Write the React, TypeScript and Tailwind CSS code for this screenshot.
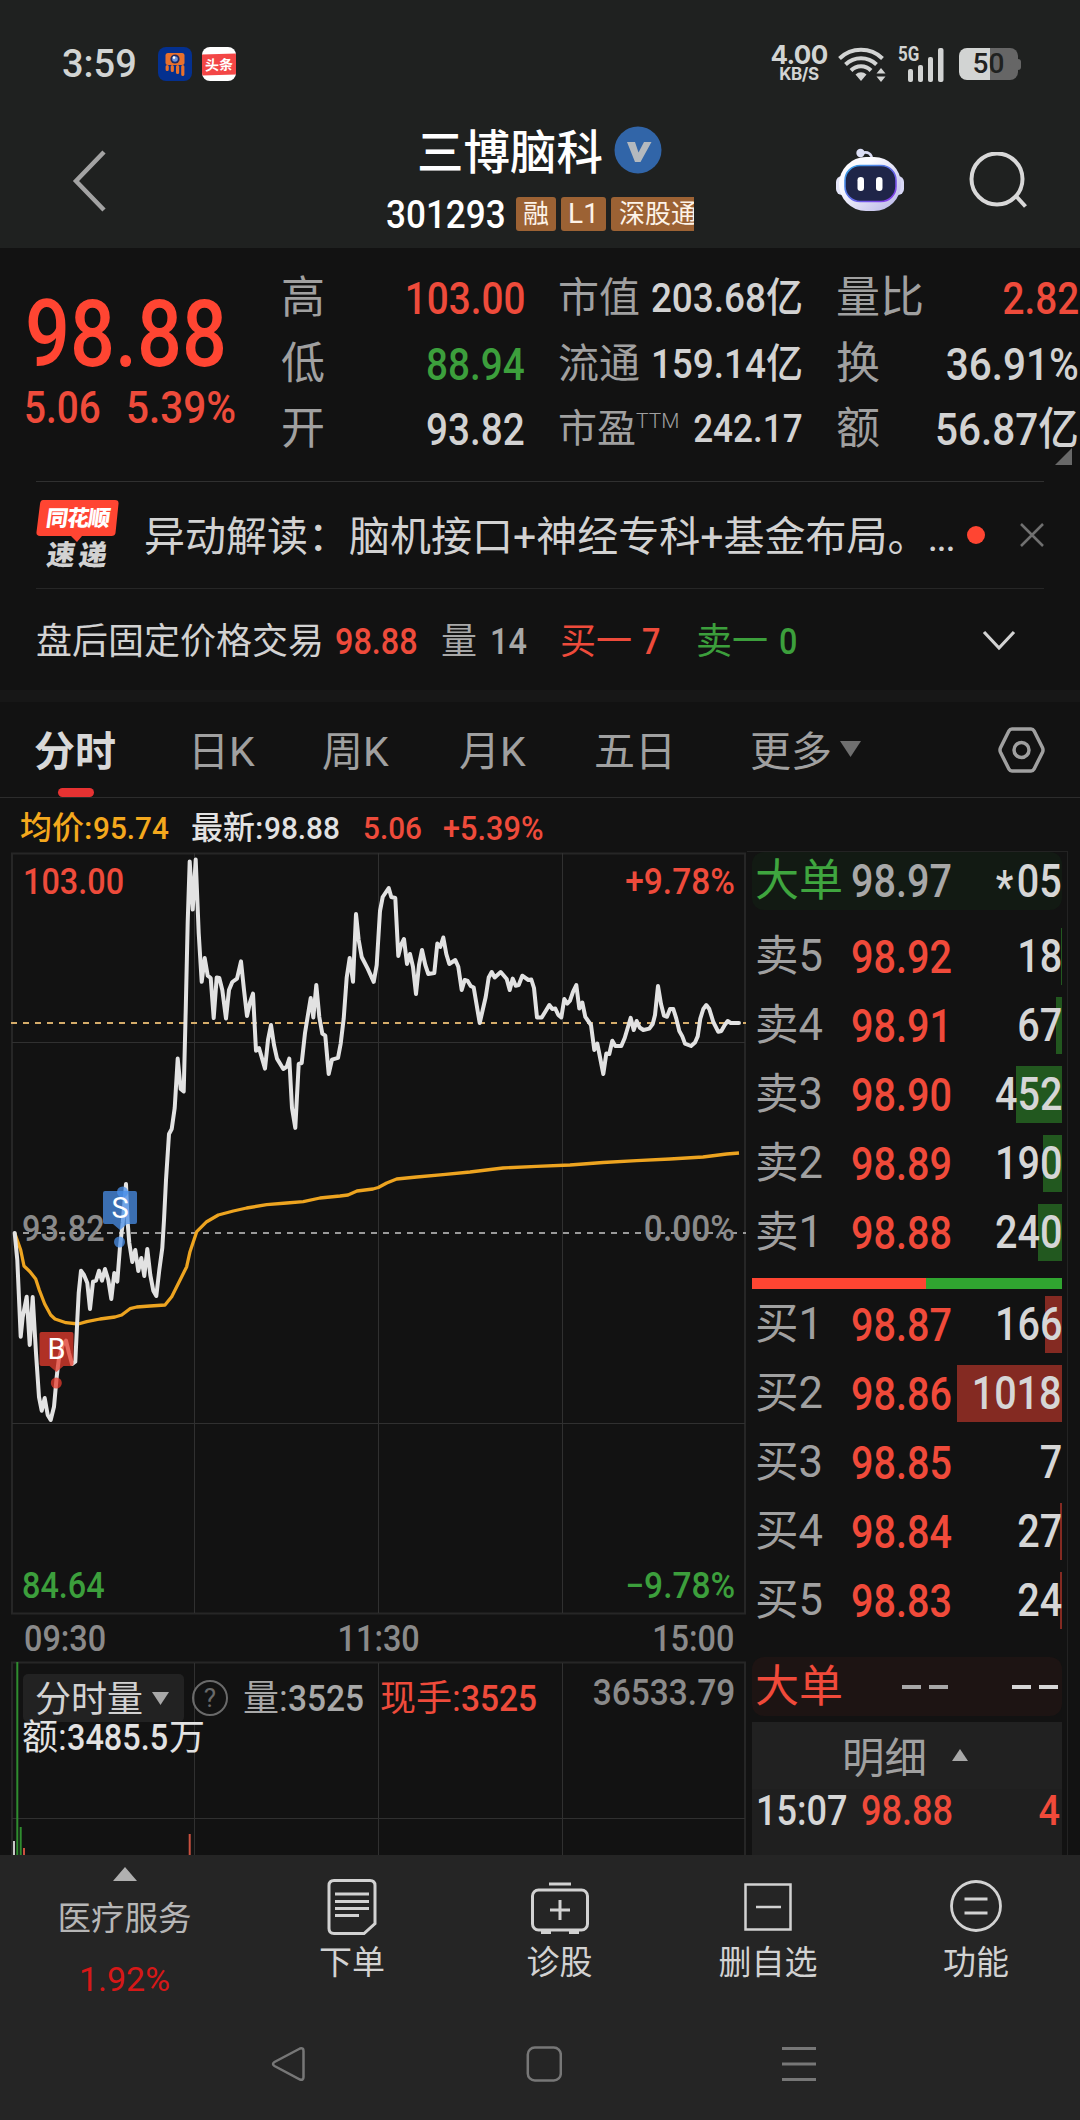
import type { ReactNode } from "react";
import { clsx } from "clsx";

interface NumProps {
  children: ReactNode;
  className?: string;
  align?: "left" | "right" | "center";
  fit?: "tight" | "base" | "wide";
}

/* Slightly condensed digits, anchored on the side they are aligned to */
function Num({ children, className, align = "left", fit = "base" }: NumProps) {
  return (
    <span
      className={clsx(
        "inline-block shrink-0 font-medium whitespace-nowrap",
        fit === "tight" && "scale-x-[0.86]",
        fit === "base" && "scale-x-[0.9]",
        fit === "wide" && "scale-x-[0.93]",
        align === "left" && "origin-left",
        align === "right" && "origin-right",
        align === "center" && "origin-center",
        className
      )}
    >
      {children}
    </span>
  );
}

interface BookRow {
  label: string;
  price: string;
  volume: string;
  bar: string;
}

const asks: BookRow[] = [
  { label: "卖5", price: "98.92", volume: "18", bar: "w-px" },
  { label: "卖4", price: "98.91", volume: "67", bar: "w-[6px]" },
  { label: "卖3", price: "98.90", volume: "452", bar: "w-[46px]" },
  { label: "卖2", price: "98.89", volume: "190", bar: "w-[19px]" },
  { label: "卖1", price: "98.88", volume: "240", bar: "w-[24px]" },
];

const bids: BookRow[] = [
  { label: "买1", price: "98.87", volume: "166", bar: "w-[17px]" },
  { label: "买2", price: "98.86", volume: "1018", bar: "w-[105px]" },
  { label: "买3", price: "98.85", volume: "7", bar: "w-0" },
  { label: "买4", price: "98.84", volume: "27", bar: "w-[2px]" },
  { label: "买5", price: "98.83", volume: "24", bar: "w-[2px]" },
];

const pricePoints =
  "14.7,1233 17.3,1260 20.7,1336.7 22.7,1317 26.7,1296.7 29.7,1345 32.7,1297 36,1353 39,1397 41.7,1410.7 44.7,1398 47.7,1415 50.7,1420 54,1406.7 56.7,1376.7 58.7,1360 62.7,1345 66,1340.7 69,1353 72,1364 75.3,1361.7 77.3,1320 78.7,1293 81,1270.7 84,1275 87.3,1283 90,1309 93,1281.7 96,1280.7 99,1270.7 102,1280.7 105,1269 108.3,1280 111.3,1299 114.3,1273 117.3,1281.7 120,1246.7 122.7,1223 126,1184 127.7,1223 129.3,1243 132.3,1262 135.3,1250 138.3,1271 141.3,1258 144.3,1276 147.3,1249 150.3,1275 153.3,1290.7 156.3,1296 159.3,1270 162.3,1248 164,1220 166,1180 169,1134 171.7,1129 174.7,1108 177.7,1058.6 180.7,1089 183.7,1091.4 185.7,1011 187.7,922 189.7,861.4 192.7,909.6 195.7,859.6 198.7,933 201.7,981.8 204.7,958 207.7,975.7 210.7,978 213.7,1018 216.7,977.5 219.3,978 222.3,990 226,1018.6 229,990 232.3,982 237,978.6 241,961.4 244,990 247,1016 250,1002.5 253,993.6 256,1050.7 259,1048 265,1068.6 268,1040 271,1025 274,1045 277,1058.6 283.3,1069 286.7,1066.8 289.3,1058.6 292,1108 295.3,1127.9 298.7,1064 301.7,1063 305,1033 310.7,998 313.3,1017.5 316.3,985 319.3,1017 322.3,1033.6 325.3,1035.7 328.7,1074 332,1059.6 338,1057.9 340.7,1043.6 343.7,1018.6 346.7,977.5 349.7,957.9 353,981.8 356,914 358.7,940 361.7,957 367.7,968.6 373.7,981.8 376.7,965 380,911 382.7,897 388.7,888 391.3,897 395.3,898 398.3,956 401,945 404,939 407,964 410,954 413,967 416,994 419,965 422,950 425.3,965 428.3,974 434.3,973 437.3,943.6 440.3,947 443.3,937.5 446.3,954 449.3,964 455.3,960 458.3,966.8 461.7,990 464.7,980 467.7,981 470.7,986 473.7,987.5 479.7,1023 485.7,997 488.7,977.5 491.7,972 494.7,977.5 500.7,972 506.7,979 509.7,990 512.7,978.6 515.7,985.7 518.7,985 522.3,975.7 528.3,980 531.3,979.5 534,988 537,1017.5 541.7,1017.5 545.7,1011 549.3,1005 552.3,1009 555.3,1008.6 558.3,1015 561.3,1017.5 564.3,999 567.3,1003.6 570,1000.7 573,991.8 576.3,985 579.3,1008.6 582.3,1002.5 585.3,1016.8 591,1025 594.3,1050 597.3,1043.6 603.3,1074 606.3,1053.6 609.3,1054 612.3,1040.7 615.3,1046 621.3,1046 624.7,1038 630.7,1017.9 633.7,1030 636.7,1021 639.7,1027.5 643.3,1030 649.3,1028.6 652.7,1024 655,1015 658,986 661,1004 664,1015.7 667,1016.8 670,1009 673.3,1009 676.3,1018.6 679.3,1031 682.3,1036.4 685,1043.6 691,1046 695,1042.5 697.7,1036.4 700.3,1018.6 703.3,1009 706.3,1005 709.3,1009 713.3,1022 718.3,1031.8 721.3,1031 724.3,1025.7 727.7,1021 730.7,1023 739,1023";

const averagePoints =
  "14.7,1233 20.7,1250 24,1266 30,1271.7 35.7,1279 39.3,1290 44.7,1304 50.7,1315 55,1319 66,1322.7 78.3,1324 86.7,1321.7 100,1319 115,1317 121.7,1315 130,1308.7 136.7,1307 150,1306 165,1305 171.7,1296.7 181.7,1276.7 186.7,1266.7 190,1251.7 196.7,1231.7 206.7,1221.7 218.3,1215 233.3,1211 246.7,1208 266.7,1204.7 286.7,1203 303.3,1201.7 320,1198 340,1196 348,1195 357,1191 373,1189 378.3,1187.5 386.7,1183 396.7,1179 416.7,1177 443,1174.6 470,1172 503,1168 536.7,1166.4 570,1165 603,1162.5 636.7,1160.7 670,1159 703,1157 726.7,1154 739,1153";

function StatusBar() {
  return (
    <div className="flex h-32 items-center pl-[62px] text-[#d2d4d3]">
      <span className="w-[96px] text-[38px] font-medium">3:59</span>
      <svg width="34" height="34" viewBox="0 0 34 34">
        <rect width="34" height="34" rx="8" fill="#04308f" />
        <rect x="7.5" y="6" width="19" height="12" rx="2.5" fill="#e8702c" />
        <circle cx="17" cy="12" r="4.6" fill="#1c2a66" />
        <circle cx="17" cy="12" r="2.8" fill="#6f95dc" />
        <circle cx="16" cy="10.6" r="1.3" fill="#fff" />
        <path
          d="M9.2 19.5v3M14.3 19.5v4M19.6 19.5v6M24.8 19.5v8"
          stroke="#e8702c"
          strokeWidth="3.2"
          strokeLinecap="round"
        />
      </svg>
      <div className="ml-[10px] flex h-[34px] w-[34px] flex-col justify-center overflow-hidden rounded-[8px] bg-white">
        <div className="flex h-[21px] -skew-y-2 items-center justify-center bg-[#f34646] text-[14px] font-bold text-white">
          头条
        </div>
      </div>
      <div className="ml-[533px] flex w-[60px] flex-col items-center font-['Inter'] font-bold">
        <span className="-mt-[3px] text-[26px] leading-[23px] tracking-tight">4.00</span>
        <span className="text-[17px] leading-[16px] tracking-tight">KB/S</span>
      </div>
      <svg className="ml-[9px]" width="48" height="36" viewBox="0 0 48 36" fill="none">
        <g stroke="#d2d4d3" strokeWidth="4">
          <path d="M1.5 12.5a31 31 0 0 1 43 0" />
          <path d="M7.5 18.5a22.5 22.5 0 0 1 31 0" />
          <path d="M13 24.5a14 14 0 0 1 20 0" />
        </g>
        <path d="M17.5 28.5a8 8 0 0 1 11 0L23 35z" fill="#d2d4d3" />
        <path d="M43 22l4.5 5.5h-9zM43 36l4.5-5.5h-9z" fill="#d2d4d3" />
      </svg>
      <div className="relative ml-[12px] h-[36px] w-[46px]">
        <span className="absolute top-0 left-0 origin-left scale-x-[0.85] text-[20px] leading-[17px] font-bold">
          5G
        </span>
        <svg width="46" height="36" viewBox="0 0 46 36" fill="#d2d4d3">
          <rect x="10" y="23" width="5" height="13" rx="2" />
          <rect x="20" y="19" width="5" height="17" rx="2" />
          <rect x="30" y="11" width="5" height="25" rx="2" />
          <rect x="40" y="2" width="5.5" height="34" rx="2" />
        </svg>
      </div>
      <div className="ml-[15px] flex items-center">
        <div className="flex h-8 w-[59px] items-center justify-center rounded-[8px] bg-linear-to-r from-[#d2d4d3] from-53% to-[#666] to-53% text-[28px] font-medium text-[#1f2120]">
          50
        </div>
        <div className="h-[11px] w-[3px] rounded-r-[3px] bg-[#666]" />
      </div>
    </div>
  );
}

function RobotIcon() {
  return (
    <svg width="70" height="66" viewBox="0 0 70 66">
      <defs>
        <linearGradient id="shell" x1="0" y1="0" x2="1" y2="1">
          <stop offset="0.3" stopColor="#fbfbff" />
          <stop offset="1" stopColor="#b4b2e6" />
        </linearGradient>
        <linearGradient id="rim" x1="0" y1="0" x2="1" y2="1">
          <stop offset="0" stopColor="#35a6e6" />
          <stop offset="1" stopColor="#8a35e8" />
        </linearGradient>
      </defs>
      <path d="M26 5c6-2 10 1 10 7" stroke="#dadcf4" strokeWidth="2.6" fill="none" />
      <circle cx="24.500" cy="5" r="4.200" fill="#dcdff5" />
      <rect x="0" y="28" width="12" height="19" rx="6" fill="#e4e5f8" />
      <rect x="56" y="28" width="12" height="19" rx="6" fill="#d8d8f6" />
      <rect x="3" y="9" width="62" height="54" rx="27" fill="url(#shell)" />
      <rect x="9" y="17.500" width="51" height="36" rx="15" fill="#1f2548" stroke="url(#rim)" strokeWidth="1.600" />
      <rect x="21.500" y="29" width="6.500" height="14" rx="3.200" fill="#fff" />
      <rect x="40" y="29" width="6.500" height="14" rx="3.200" fill="#fff" />
    </svg>
  );
}

function TitleBar() {
  return (
    <div className="flex h-[120px]">
      <div className="w-[386px] pt-[22px] pl-[71px]">
        <svg width="38" height="62" viewBox="0 0 38 62" fill="none">
          <path d="M33 2L5 31l28 29" stroke="#a3a3a3" strokeWidth="4.500" />
        </svg>
      </div>
      <div className="w-[450px]">
        <div className="flex h-[47px] items-center pl-[31px]">
          <span className="w-[197px] pt-[3px] text-[46.500px] font-medium text-white">三博脑科</span>
          <svg className="-mt-[3px]" width="48" height="48" viewBox="0 0 48 48">
            <circle cx="24" cy="24" r="23.500" fill="#3165a8" />
            <path d="M13 16h8l3.500 10.500L30 16h7.500L26.500 36h-5.500z" fill="#b4b9be" />
          </svg>
        </div>
        <div className="mt-[21px] flex h-[35px] items-center text-[26px] text-[#fdf3e8]">
          <div className="w-[130px] pt-[3px]">
            <Num className="text-[39px] text-white">301293</Num>
          </div>
          <span className="flex h-[34px] w-[40px] items-center justify-center rounded-[3px] bg-[#9c6234]">融</span>
          <span className="ml-[5px] flex h-[34px] w-[45px] items-center justify-center rounded-[3px] bg-[#9c6234] text-[28px]">
            L1
          </span>
          <span className="ml-[5px] flex h-[34px] w-[83px] items-center overflow-hidden rounded-l-[3px] bg-[#9c6234] pl-[8px] whitespace-nowrap">
            深股通
          </span>
        </div>
      </div>
      <div className="pt-[20px]">
        <RobotIcon />
      </div>
      <svg className="mt-[24px] ml-[62px]" width="62" height="62" viewBox="0 0 62 62" fill="none">
        <circle cx="29" cy="27" r="25.500" stroke="#d8d8d8" strokeWidth="4" />
        <path d="M48 44l9.500 10.500" stroke="#d8d8d8" strokeWidth="4" />
      </svg>
    </div>
  );
}

function Quote() {
  return (
    <section className="relative flex h-[233px] whitespace-nowrap text-[#d2d2d2]">
      <div className="w-[281px] pl-[24px] text-[#ee4b3b]">
        <Num fit="tight" className="mt-[41px] ml-px block text-[92px] leading-[92px] text-[#ff4532]">98.88</Num>
        <div className="mt-[4px] flex leading-[45px]">
          <Num fit="tight" className="w-[102px] text-[45px]">5.06</Num>
          <Num className="text-[45px]">5.39%</Num>
        </div>
      </div>
      <div className="w-[244px] pt-[18px] text-[44px] leading-[65.500px]">
        <div className="flex justify-between">
          <span className="text-[#a0a0a0]">高</span>
          <Num align="right" fit="tight" className="text-[45px] text-[#ee4b3b]">103.00</Num>
        </div>
        <div className="flex justify-between">
          <span className="text-[#a0a0a0]">低</span>
          <Num align="right" fit="tight" className="text-[45px] text-[#3c9f3c]">88.94</Num>
        </div>
        <div className="flex justify-between">
          <span className="text-[#a0a0a0]">开</span>
          <Num align="right" fit="tight" className="text-[45px]">93.82</Num>
        </div>
      </div>
      <div className="ml-[33px] w-[245px] pt-[18px] text-[41px] leading-[65.500px]">
        <div className="flex justify-between">
          <span className="text-[#a0a0a0]">市值</span>
          <Num align="right" className="-ml-4">203.68亿</Num>
        </div>
        <div className="flex justify-between">
          <span className="text-[#a0a0a0]">流通</span>
          <Num align="right" className="-ml-4">159.14亿</Num>
        </div>
        <div className="flex justify-between">
          <span className="flex text-[39px] text-[#a0a0a0]">
            市盈
            <span className="text-[21px] leading-[48px] font-light">TTM</span>
          </span>
          <Num align="right" className="text-[39px]">242.17</Num>
        </div>
      </div>
      <div className="ml-[33px] w-[243px] pt-[18px] text-[44px] leading-[65.500px]">
        <div className="flex justify-between">
          <span className="text-[#a0a0a0]">量比</span>
          <Num align="right" fit="tight" className="text-[45px] text-[#ee4b3b]">2.82</Num>
        </div>
        <div className="flex justify-between">
          <span className="text-[#a0a0a0]">换</span>
          <Num align="right" className="text-[45px]">36.91%</Num>
        </div>
        <div className="flex justify-between">
          <span className="text-[#a0a0a0]">额</span>
          <Num align="right" className="text-[45px]">56.87亿</Num>
        </div>
      </div>
      <svg className="absolute top-[200px] left-[1055px]" width="17" height="17" viewBox="0 0 17 17">
        <path d="M17 0v17H0z" fill="#686868" />
      </svg>
    </section>
  );
}

function NewsRow() {
  return (
    <div className="mx-[36px] flex h-[107px] items-center border-t border-[#303030] text-[#d2d2d2]">
      <svg className="overflow-visible" width="84" height="70" viewBox="0 0 84 70">
        <path d="M7 0h72q4 0 3.500 4l-3 29q-.5 3-4 3H46l-5 6-6-6H4q-4 0-3.500-4l3.500-28q.5-4 3-4z" fill="#ff4532" />
        <g fontFamily="Noto Sans CJK SC" fontWeight="900" transform="skewX(-8)">
          <text x="13" y="26.500" fontSize="22" fill="#fff" textLength="64">
            同花顺
          </text>
          <text x="19" y="65" fontSize="28" fill="#d2d2d2" textLength="60">
            速递
          </text>
        </g>
      </svg>
      <span className="mt-[4px] ml-[24px] text-[41px] whitespace-nowrap">
        异动解读：脑机接口+神经专科+基金布局。
      </span>
      <span className="mt-[4px] -ml-[1px] text-[41px] tracking-[-2px]">...</span>
      <span className="ml-[13px] h-[18px] w-[18px] shrink-0 rounded-full bg-[#ff4532]" />
      <svg className="ml-auto shrink-0" width="24" height="24" viewBox="0 0 24 24">
        <path d="M1 1l22 22M23 1L1 23" stroke="#707070" strokeWidth="2.500" />
      </svg>
    </div>
  );
}

function AfterHoursRow() {
  return (
    <div className="mx-[36px] flex h-[102px] items-center border-t border-[#262626] pt-[5px] text-[36px] text-[#d2d2d2]">
      <span className="w-[299px] whitespace-nowrap">盘后固定价格交易</span>
      <Num className="w-[106px] text-[#ee4b3b]">98.88</Num>
      <span className="w-[49px] text-[#a8a8a8]">量</span>
      <Num className="w-[70px] text-[#a8a8a8]">14</Num>
      <span className="w-[82px] text-[#ee4b3b]">买一</span>
      <Num className="w-[54px] text-[#ee4b3b]">7</Num>
      <span className="w-[83px] text-[#3c9f3c]">卖一</span>
      <Num className="text-[#3c9f3c]">0</Num>
      <svg className="mr-[28px] mb-[3px] ml-auto" width="34" height="22" viewBox="0 0 34 22" fill="none">
        <path d="M2 2l15 16L32 2" stroke="#d2d2d2" strokeWidth="3.200" />
      </svg>
    </div>
  );
}

function Tabs() {
  return (
    <nav className="flex h-[96px] border-b border-[#2c2c2c] text-[41px] leading-[101px] whitespace-nowrap text-[#a0a0a0]">
      <div className="relative ml-[34px] w-[154px] font-bold text-[#d8d8d8]">
        分时
        <span className="absolute bottom-0 left-[24px] h-[9px] w-[36px] rounded-full bg-[#e63232]" />
      </div>
      <span className="w-[134px]">日K</span>
      <span className="w-[137px]">周K</span>
      <span className="w-[135px]">月K</span>
      <span className="w-[156px]">五日</span>
      <span className="w-[90px]">更多</span>
      <svg className="mt-[39px]" width="21" height="16" viewBox="0 0 21 16">
        <path d="M0 0h21L10.500 16z" fill="#6f6f6f" />
      </svg>
      <svg className="mt-[24px] ml-[136px]" width="50" height="48" viewBox="0 0 50 48" fill="none" stroke="#a0a0a0" strokeWidth="3.500">
        <path d="M15 3h19q2 0 3 1.800l8.500 17q1 2.200 0 4.400l-8.500 17q-1 1.800-3 1.800H15q-2 0-3-1.800l-8.500-17q-1-2.200 0-4.400l8.500-17Q13 3 15 3z" />
        <circle cx="24.500" cy="24" r="7.500" />
      </svg>
    </nav>
  );
}

function ChartLegend() {
  return (
    <div className="flex h-[54px] items-center pt-[6px] pl-[20px] text-[32px] whitespace-nowrap">
      <span className="flex w-[171px] font-medium text-[#f4a81d]">
        均价:<Num fit="wide" className="ml-px">95.74</Num>
      </span>
      <span className="flex w-[172px] font-medium text-[#e2e2e2]">
        最新:<Num fit="wide" className="ml-px">98.88</Num>
      </span>
      <Num fit="wide" className="w-[80px] text-[#ee4b3b]">5.06</Num>
      <Num fit="wide" className="text-[33px] text-[#ee4b3b]">+5.39%</Num>
    </div>
  );
}

function PriceChart() {
  return (
    <div className="relative h-[764px] w-[746px] text-[36px] leading-[36px]">
      <svg width="746" height="764" viewBox="0 852 746 764" fill="none">
        <rect x="12" y="853.500" width="733" height="760" stroke="#262626" strokeWidth="2" />
        <path d="M194.500 853v760M378.500 853v760M562.500 853v760M12 1042.500h733M12 1423.500h733" stroke="#303030" />
        <path d="M11 1023h735" stroke="#d5ac6a" strokeWidth="2" strokeDasharray="6 6" />
        <path d="M23 1233h723" stroke="#9a9a9a" strokeWidth="2" strokeDasharray="6 6" />
        <polyline points={averagePoints} stroke="#eda420" strokeWidth="3.300" strokeLinejoin="round" />
        <polyline points={pricePoints} stroke="#e2e2e2" strokeWidth="4" strokeLinejoin="round" strokeLinecap="round" />
        <g fill="#4a8fe8" fillOpacity="0.75">
          <path d="M105 1191h30q2 0 2 2v29q0 2-2 2h-8l-7 6-7-6h-8q-2 0-2-2v-29q0-2 2-2z" />
          <circle cx="119.500" cy="1242" r="5.500" />
          <circle cx="122.500" cy="1192" r="5.500" />
        </g>
        <g fill="#e63c2e" fillOpacity="0.75">
          <path d="M41.500 1332h30q2 0 2 2v30q0 2-2 2h-8l-7 6-7-6h-8q-2 0-2-2v-30q0-2 2-2z" />
          <circle cx="56.300" cy="1383" r="5.500" />
        </g>
        <g fill="#fff" fontFamily="Roboto" fontSize="29" textAnchor="middle">
          <text x="120" y="1218">S</text>
          <text x="56.500" y="1359">B</text>
        </g>
      </svg>
      <Num className="absolute top-[12px] left-[23px] text-[#ee4b3b]">103.00</Num>
      <Num align="right" fit="wide" className="absolute top-[12px] right-[11px] text-[#ee4b3b]">+9.78%</Num>
      <Num className="absolute top-[359px] left-[22px] text-[#8a8a8a]">93.82</Num>
      <Num align="right" fit="wide" className="absolute top-[359px] right-[11px] text-[#8a8a8a]">0.00%</Num>
      <Num className="absolute top-[716px] left-[22px] text-[#3c9f3c]">84.64</Num>
      <Num align="right" fit="wide" className="absolute top-[716px] right-[11px] text-[#3c9f3c]">−9.78%</Num>
    </div>
  );
}

function VolumeChart() {
  return (
    <div className="relative h-[194px] w-[746px] overflow-hidden text-[36px]">
      <svg className="absolute top-0 left-0" width="746" height="194" viewBox="0 1661 746 194" fill="none">
        <path d="M12 1855v-192.500h733v192.500" stroke="#262626" strokeWidth="2" />
        <path d="M194.500 1663v192M378.500 1663v192M562.500 1663v192M12 1818.500h733" stroke="#303030" />
        <path d="M14 1841v14" stroke="#c8c8c8" strokeWidth="2" />
        <path d="M17.300 1662v193M20.700 1827v28" stroke="#2f8c2f" strokeWidth="2" />
        <path d="M24 1848v7M189.700 1834v21" stroke="#c9503f" strokeWidth="2" />
      </svg>
      <div className="relative mt-[13px] flex h-[48px] items-center pl-[23px] whitespace-nowrap">
        <div className="flex h-[48px] w-[161px] items-center rounded-[5px] bg-[#222] pl-[12px] text-[#d2d2d2]">
          <span className="pt-[3px] text-[36px]">分时量</span>
          <svg className="ml-[9px]" width="17" height="13" viewBox="0 0 17 13">
            <path d="M0 0h17L8.500 13z" fill="#a8a8a8" />
          </svg>
        </div>
        <span className="ml-[8px] flex h-[36px] w-[36px] items-center justify-center rounded-full border-2 border-[#6a6a6a] text-[26px] text-[#6a6a6a]">
          ?
        </span>
        <span className="ml-[15px] flex w-[137px] pt-[2px] text-[#a8a8a8]">
          量:<Num fit="wide">3525</Num>
        </span>
        <span className="flex w-[165px] pt-[2px] text-[#ee4b3b]">
          现手:<Num fit="wide">3525</Num>
        </span>
        <Num align="right" fit="wide" className="absolute top-px right-[11px] text-[36px] leading-[36px] text-[#8a8a8a]">
          36533.79
        </Num>
      </div>
      <div className="relative flex h-[32px] items-center pl-[22px] text-[36px] leading-[32px] whitespace-nowrap text-[#e2e2e2]">
        额:<Num className="-mr-[10px]">3485.5</Num>万
      </div>
    </div>
  );
}

function BookLine({ row, side }: { row: BookRow; side: "ask" | "bid" }) {
  return (
    <div className="relative my-[6px] flex h-[57px] items-center">
      <span
        className={clsx("absolute top-0 right-0 h-full", row.bar, side === "ask" ? "bg-[#22581f]" : "bg-[#842a22]")}
      />
      <span className="w-[99px] shrink-0 pl-[3px] text-[43.500px] text-[#a0a0a0]">{row.label}</span>
      <Num fit="tight" className="text-[46px] text-[#f04a3a]">{row.price}</Num>
      <Num align="right" fit="tight" className="absolute top-[5px] right-0 text-[46px] text-[#d6d6d6]">
        {row.volume}
      </Num>
    </div>
  );
}

function OrderBook() {
  return (
    <aside className="ml-px h-[1004px] w-[321px] border-t border-r border-[#232323] px-[5px]">
      <div className="flex h-[58px] items-center rounded-xl bg-[#121a13] pl-[3px]">
        <span className="w-[96px] text-[44px] text-[#3fa63f]">大单</span>
        <Num fit="tight" className="text-[46px] text-[#a8a8a8]">98.97</Num>
        <Num align="right" fit="tight" className="ml-auto text-[46px] text-[#d6d6d6]">
          <span className="relative top-[6px] mr-[4px]">*</span>05
        </Num>
      </div>
      <div className="mt-[12px] flex flex-col">
        {asks.map((row) => (
          <BookLine key={row.label} row={row} side="ask" />
        ))}
      </div>
      <div className="mt-[11px] flex h-[11px]">
        <div className="w-[174px] bg-[#ff4532]" />
        <div className="flex-1 bg-[#30a530]" />
      </div>
      <div className="mt-px flex flex-col">
        {bids.map((row) => (
          <BookLine key={row.label} row={row} side="bid" />
        ))}
      </div>
      <div className="mt-[22px] flex h-[59px] items-center rounded-xl bg-[#1d1413] pl-[3px]">
        <span className="w-[147px] text-[44px] text-[#f04a3a]">大单</span>
        <span className="h-1 w-[19px] bg-[#a8a8a8]" />
        <span className="ml-[8px] h-1 w-[19px] bg-[#a8a8a8]" />
        <span className="ml-auto h-1 w-[19px] bg-[#d6d6d6]" />
        <span className="mr-[4px] ml-[8px] h-1 w-[19px] bg-[#d6d6d6]" />
      </div>
      <div className="mt-[6px] flex h-[67px] items-center bg-[#212121] pt-[8px] pl-[90px] text-[42.500px] text-[#a0a0a0]">
        明细
        <svg className="mb-[10px] ml-[25px]" width="16" height="12" viewBox="0 0 16 12">
          <path d="M8 0l8 12H0z" fill="#a8a8a8" />
        </svg>
      </div>
      <div className="flex h-[66px] items-start bg-[#1f1f1f] pt-px pl-[4px] text-[42px] leading-[42px]">
        <Num fit="tight" className="w-[105px] text-[#d6d6d6]">15:07</Num>
        <Num fit="tight" className="text-[#f04a3a]">98.88</Num>
        <Num align="right" className="mr-[2px] ml-auto text-[#f04a3a]">4</Num>
      </div>
    </aside>
  );
}

function BottomBar() {
  return (
    <footer className="h-[265px] bg-[#252525] text-[33px] text-[#d2d2d2]">
      <div className="flex h-[145px]">
        <div className="flex w-[249px] flex-col items-center pt-[12px] leading-[34px] text-[#b6b6b6]">
          <svg width="24" height="14" viewBox="0 0 24 14">
            <path d="M12 0l12 14H0z" fill="#b0b0b0" />
          </svg>
          <span className="mt-[21px] text-[33.500px]">医疗服务</span>
          <span className="mt-[26px] text-[34px] text-[#d61818]">1.92%</span>
        </div>
        <div className="flex w-[206px] flex-col items-center pt-[24px] leading-[34px]">
          <svg width="50" height="56" viewBox="0 0 50 56" fill="none" stroke="#d2d2d2" strokeWidth="3">
            <path d="M7 1.500h36q5 0 5 5v38l-11 10H7q-5 0-5-5v-43q0-5 5-5z" />
            <path d="M8 15h34M8 22.500h34M8 29.500h34M8 36.500h24" />
          </svg>
          <span className="mt-[11px]">下单</span>
        </div>
        <div className="flex w-[209px] flex-col items-center pt-[27px] leading-[34px]">
          <svg width="58" height="53" viewBox="0 0 58 53" fill="none" stroke="#d2d2d2" strokeWidth="3">
            <path d="M18 2h22M29 18v20M19 28h20" />
            <rect x="1.500" y="8" width="55" height="40" rx="6" />
            <path d="M10 50.500h10M38 50.500h10" />
          </svg>
          <span className="mt-[11px]">诊股</span>
        </div>
        <div className="flex w-[208px] flex-col items-center pt-[28px] leading-[34px]">
          <svg width="48" height="48" viewBox="0 0 48 48" fill="none" stroke="#d2d2d2" strokeWidth="2.500">
            <path d="M1.500 1.500h45v45h-45zM12 24h25" />
          </svg>
          <span className="mt-[15px]">删自选</span>
        </div>
        <div className="flex w-[208px] flex-col items-center pt-[25px] leading-[34px]">
          <svg width="52" height="52" viewBox="0 0 52 52" fill="none" stroke="#d2d2d2" strokeWidth="2.800">
            <circle cx="26" cy="26" r="24.500" />
            <path d="M14.500 19h23M14.500 33h23" />
          </svg>
          <span className="mt-[14px]">功能</span>
        </div>
      </div>
      <div className="flex pt-[46px] pl-[271px]">
        <svg width="34" height="36" viewBox="0 0 34 36" fill="none" stroke="#777" strokeWidth="2.500">
          <path d="M29 2.500L3.500 16q-3 2 0 4L29 33.500q3.500 1 3.500-2.500V5q0-3.500-3.500-2.500z" />
        </svg>
        <svg className="ml-[221px]" width="36" height="36" viewBox="0 0 36 36" fill="none" stroke="#777" strokeWidth="2.500">
          <rect x="1.800" y="1.500" width="33" height="33" rx="7" />
        </svg>
        <svg className="ml-[220px]" width="34" height="36" viewBox="0 0 34 36" fill="none" stroke="#777" strokeWidth="3">
          <path d="M0 2.500h34M0 18h34M0 33.500h34" />
        </svg>
      </div>
    </footer>
  );
}

export default function App() {
  return (
    <div className="h-[2120px] w-[1080px] overflow-hidden bg-[#121212] font-['Roboto','Noto_Sans_CJK_SC',sans-serif] leading-none">
      <header className="h-[248px] bg-[#1f2120]">
        <StatusBar />
        <TitleBar />
      </header>
      <Quote />
      <NewsRow />
      <AfterHoursRow />
      <div className="h-[12px] bg-[#171717]" />
      <Tabs />
      <div className="flex h-[1057px]">
        <div className="w-[746px]">
          <ChartLegend />
          <PriceChart />
          <div className="flex h-[45px] items-center justify-between pr-[12px] pl-[24px] text-[36px] text-[#8a8a8a]">
            <Num>09:30</Num>
            <Num align="center">11:30</Num>
            <Num align="right">15:00</Num>
          </div>
          <VolumeChart />
        </div>
        <div className="pt-[53px]">
          <OrderBook />
        </div>
      </div>
      <BottomBar />
    </div>
  );
}
